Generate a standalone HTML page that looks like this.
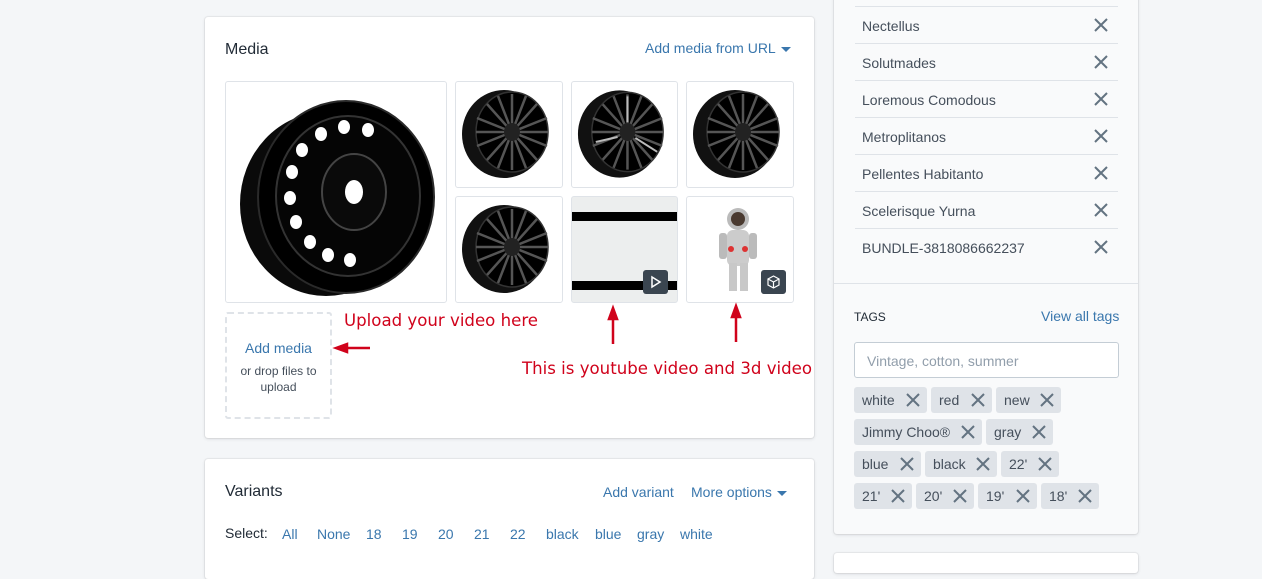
<!DOCTYPE html>
<html><head><style>
*{box-sizing:border-box;margin:0;padding:0}
body{width:1262px;height:558px;overflow:hidden;background:#f4f6f8;font-family:"Liberation Sans",sans-serif;color:#212b36;position:relative;font-size:14px}
.card{position:absolute;background:#fff;border-radius:3px;box-shadow:0 0 0 1px rgba(63,63,68,.06),0 1px 3px rgba(63,63,68,.15)}
.a{position:absolute;white-space:nowrap}
.link{color:#3a77ad}
.tile{position:absolute;border:1px solid #dfe3e8;border-radius:3px;background:#fff;overflow:hidden}
.row{position:absolute;left:855px;width:263px;height:37px;border-top:1px solid #dfe3e8;font-size:14px;color:#454f5b;padding:11px 0 0 7px}
.x{position:absolute;right:10px;top:11px;width:14px;height:14px}
.chip{position:absolute;height:26px;background:#dfe3e8;border-radius:3px;font-size:14px;color:#454f5b;padding:5px 0 0 8px}
.chip svg{position:absolute;right:7px;top:6px}
.tri{display:inline-block;width:0;height:0;border-left:5px solid transparent;border-right:5px solid transparent;border-top:5px solid #3a77ad;margin-left:5px;vertical-align:middle}
.red{color:#d0021b;font-size:16.6px;position:absolute;white-space:nowrap;font-family:"DejaVu Sans","Liberation Sans",sans-serif}
</style></head><body>

<div class="card" style="left:205px;top:17px;width:609px;height:421px"></div>
<div class="a" style="left:225px;top:41px;font-size:16px">Media</div>
<div class="a link" style="left:645px;top:40px;font-size:14px">Add media from URL<span class="tri"></span></div>

<svg width="0" height="0" style="position:absolute"><defs>
<g id="wh">
<ellipse cx="48" cy="52" rx="42" ry="44" fill="#111"/>
<ellipse cx="56" cy="50" rx="36" ry="40" fill="#000" stroke="#333" stroke-width="1.5"/>
<g stroke="#555" stroke-width="2.5">
<line x1="56" y1="12" x2="56" y2="88"/><line x1="20" y1="50" x2="92" y2="50"/>
<line x1="31" y1="22" x2="81" y2="78"/><line x1="81" y1="22" x2="31" y2="78"/>
<line x1="42" y1="14" x2="70" y2="86"/><line x1="70" y1="14" x2="42" y2="86"/>
<line x1="21" y1="36" x2="91" y2="64"/><line x1="91" y1="36" x2="21" y2="64"/>
</g>
<ellipse cx="56" cy="50" rx="8" ry="9" fill="#222"/>
</g></defs></svg>

<div class="tile" style="left:225px;top:81px;width:222px;height:222px">
<svg width="220" height="220" viewBox="0 0 220 220">
<ellipse cx="100" cy="122" rx="86" ry="92" fill="#0a0a0a"/>
<ellipse cx="120" cy="115" rx="88" ry="96" fill="#000" stroke="#2a2a2a" stroke-width="2"/>
<ellipse cx="122" cy="114" rx="72" ry="80" fill="#050505" stroke="#333" stroke-width="2"/>
<g fill="#fff">
<ellipse cx="142" cy="48" rx="6" ry="7"/><ellipse cx="118" cy="45" rx="6" ry="7"/><ellipse cx="95" cy="52" rx="6" ry="7"/><ellipse cx="76" cy="68" rx="6" ry="7"/>
<ellipse cx="66" cy="90" rx="6" ry="7"/><ellipse cx="64" cy="116" rx="6" ry="7"/><ellipse cx="70" cy="140" rx="6" ry="7"/>
<ellipse cx="84" cy="160" rx="6" ry="7"/><ellipse cx="102" cy="173" rx="6" ry="7"/><ellipse cx="124" cy="178" rx="6" ry="7"/>
</g>
<ellipse cx="128" cy="110" rx="32" ry="38" fill="#0a0a0a" stroke="#444" stroke-width="2"/>
<ellipse cx="128" cy="110" rx="9" ry="12" fill="#fff"/>
</svg></div>

<div class="tile" style="left:455px;top:81px;width:108px;height:107px"><svg width="106" height="105" viewBox="0 0 106 105"><use href="#wh"/></svg></div>
<div class="tile" style="left:571px;top:81px;width:107px;height:107px"><svg width="105" height="105" viewBox="0 0 106 105"><use href="#wh"/><g stroke="#bbb" stroke-width="2"><line x1="56" y1="14" x2="56" y2="40"/><line x1="24" y1="60" x2="46" y2="55"/><line x1="86" y1="70" x2="64" y2="56"/></g></svg></div>
<div class="tile" style="left:686px;top:81px;width:108px;height:107px"><svg width="106" height="105" viewBox="0 0 106 105"><use href="#wh"/></svg></div>
<div class="tile" style="left:455px;top:196px;width:108px;height:107px"><svg width="106" height="105" viewBox="0 0 106 105"><use href="#wh"/></svg></div>
<div class="tile" style="left:571px;top:196px;width:107px;height:107px;background:#eceeee">
<div style="position:absolute;left:0;top:15px;width:106px;height:9px;background:#000"></div>
<div style="position:absolute;left:0;top:84px;width:106px;height:9px;background:#000"></div>
<div style="position:absolute;left:71px;top:73px;width:25px;height:24px;background:#3a4550;border-radius:3px"><svg width="25" height="24"><path d="M9 7 L17 12 L9 17 Z" fill="none" stroke="#fff" stroke-width="1.5"/></svg></div>
</div>
<div class="tile" style="left:686px;top:196px;width:108px;height:107px">
<svg width="106" height="105"><circle cx="51" cy="22" r="11" fill="#bbb"/><circle cx="51" cy="22" r="7" fill="#4a3a30"/><rect x="40" y="33" width="22" height="36" rx="6" fill="#ccc"/><rect x="32" y="36" width="8" height="26" rx="3" fill="#bbb"/><rect x="62" y="36" width="8" height="26" rx="3" fill="#bbb"/><rect x="42" y="66" width="8" height="28" fill="#c8c8c8"/><rect x="53" y="66" width="8" height="28" fill="#c8c8c8"/><circle cx="44" cy="52" r="3" fill="#d33"/><circle cx="58" cy="52" r="3" fill="#d33"/></svg>
<div style="position:absolute;left:74px;top:73px;width:25px;height:24px;background:#3a4550;border-radius:3px"><svg width="25" height="24"><path d="M12.5 6 L18 9 L18 15 L12.5 18 L7 15 L7 9 Z M7 9 L12.5 12 L18 9 M12.5 12 L12.5 18" fill="none" stroke="#fff" stroke-width="1.2"/></svg></div>
</div>

<div style="position:absolute;left:225px;top:312px;width:107px;height:107px;border:2px dashed #dfe3e8;border-radius:3px"></div>
<div class="a link" style="left:225px;top:340px;width:107px;text-align:center;font-size:14px">Add media</div>
<div class="a" style="left:225px;top:363px;width:107px;text-align:center;font-size:12px;color:#454f5b;white-space:normal;line-height:16px;padding:0 8px">or drop files to upload</div>

<div class="red" style="left:344px;top:311px">Upload your video here</div>
<div class="red" style="left:522px;top:359px">This is youtube video and 3d video</div>
<svg class="a" style="left:330px;top:300px" width="500" height="60">
<g stroke="#d0021b" stroke-width="2.5" fill="#d0021b">
<line x1="16" y1="48" x2="40" y2="48"/><path d="M6 48 L17 44 L17 52 Z"/>
<line x1="283" y1="18" x2="283" y2="44"/><path d="M283 8 L279 19 L287 19 Z"/>
<line x1="406" y1="16" x2="406" y2="42"/><path d="M406 6 L402 17 L410 17 Z"/>
</g></svg>

<div class="card" style="left:205px;top:459px;width:609px;height:120px"></div>
<div class="a" style="left:225px;top:483px;font-size:16px">Variants</div>
<div class="a link" style="left:603px;top:484px">Add variant</div>
<div class="a link" style="left:691px;top:484px">More options<span class="tri"></span></div>
<div class="a" style="left:225px;top:525px;color:#212b36">Select:</div>
<div class="a link" style="left:282px;top:526px">All</div>
<div class="a link" style="left:317px;top:526px">None</div>
<div class="a link" style="left:366px;top:526px">18</div>
<div class="a link" style="left:402px;top:526px">19</div>
<div class="a link" style="left:438px;top:526px">20</div>
<div class="a link" style="left:474px;top:526px">21</div>
<div class="a link" style="left:510px;top:526px">22</div>
<div class="a link" style="left:546px;top:526px">black</div>
<div class="a link" style="left:595px;top:526px">blue</div>
<div class="a link" style="left:637px;top:526px">gray</div>
<div class="a link" style="left:680px;top:526px">white</div>

<div class="card" style="left:834px;top:-10px;width:304px;height:544px;background:#f9fafb"></div>
<div class="card" style="left:834px;top:553px;width:304px;height:20px"></div>
<div style="position:absolute;left:834px;top:283px;width:304px;height:1px;background:#dfe3e8"></div>

<svg width="0" height="0" style="position:absolute"><defs><path id="xx" d="M1 1 L13 13 M13 1 L1 13" stroke="#637381" stroke-width="2"/></defs></svg>
<div class="row" style="top:6px">Nectellus<svg class="x"><use href="#xx"/></svg></div>
<div class="row" style="top:43px">Solutmades<svg class="x"><use href="#xx"/></svg></div>
<div class="row" style="top:80px">Loremous Comodous<svg class="x"><use href="#xx"/></svg></div>
<div class="row" style="top:117px">Metroplitanos<svg class="x"><use href="#xx"/></svg></div>
<div class="row" style="top:154px">Pellentes Habitanto<svg class="x"><use href="#xx"/></svg></div>
<div class="row" style="top:191px">Scelerisque Yurna<svg class="x"><use href="#xx"/></svg></div>
<div class="row" style="top:228px">BUNDLE-3818086662237<svg class="x"><use href="#xx"/></svg></div>

<div class="a" style="left:854px;top:310px;font-size:12px">TAGS</div>
<div class="a link" style="left:1041px;top:308px">View all tags</div>
<div style="position:absolute;left:854px;top:342px;width:265px;height:36px;border:1px solid #c4cdd5;border-radius:3px;background:#fff;color:#919eab;padding:10px 0 0 12px;font-size:14px">Vintage, cotton, summer</div>

<div class="chip" style="left:854px;top:387px;width:73px">white<svg width="14" height="14"><use href="#xx"/></svg></div>
<div class="chip" style="left:931px;top:387px;width:61px">red<svg width="14" height="14"><use href="#xx"/></svg></div>
<div class="chip" style="left:996px;top:387px;width:65px">new<svg width="14" height="14"><use href="#xx"/></svg></div>
<div class="chip" style="left:854px;top:419px;width:128px">Jimmy Choo®<svg width="14" height="14"><use href="#xx"/></svg></div>
<div class="chip" style="left:986px;top:419px;width:67px">gray<svg width="14" height="14"><use href="#xx"/></svg></div>
<div class="chip" style="left:854px;top:451px;width:67px">blue<svg width="14" height="14"><use href="#xx"/></svg></div>
<div class="chip" style="left:925px;top:451px;width:72px">black<svg width="14" height="14"><use href="#xx"/></svg></div>
<div class="chip" style="left:1001px;top:451px;width:58px">22'<svg width="14" height="14"><use href="#xx"/></svg></div>
<div class="chip" style="left:854px;top:483px;width:58px">21'<svg width="14" height="14"><use href="#xx"/></svg></div>
<div class="chip" style="left:916px;top:483px;width:58px">20'<svg width="14" height="14"><use href="#xx"/></svg></div>
<div class="chip" style="left:978px;top:483px;width:59px">19'<svg width="14" height="14"><use href="#xx"/></svg></div>
<div class="chip" style="left:1041px;top:483px;width:58px">18'<svg width="14" height="14"><use href="#xx"/></svg></div>

</body></html>
